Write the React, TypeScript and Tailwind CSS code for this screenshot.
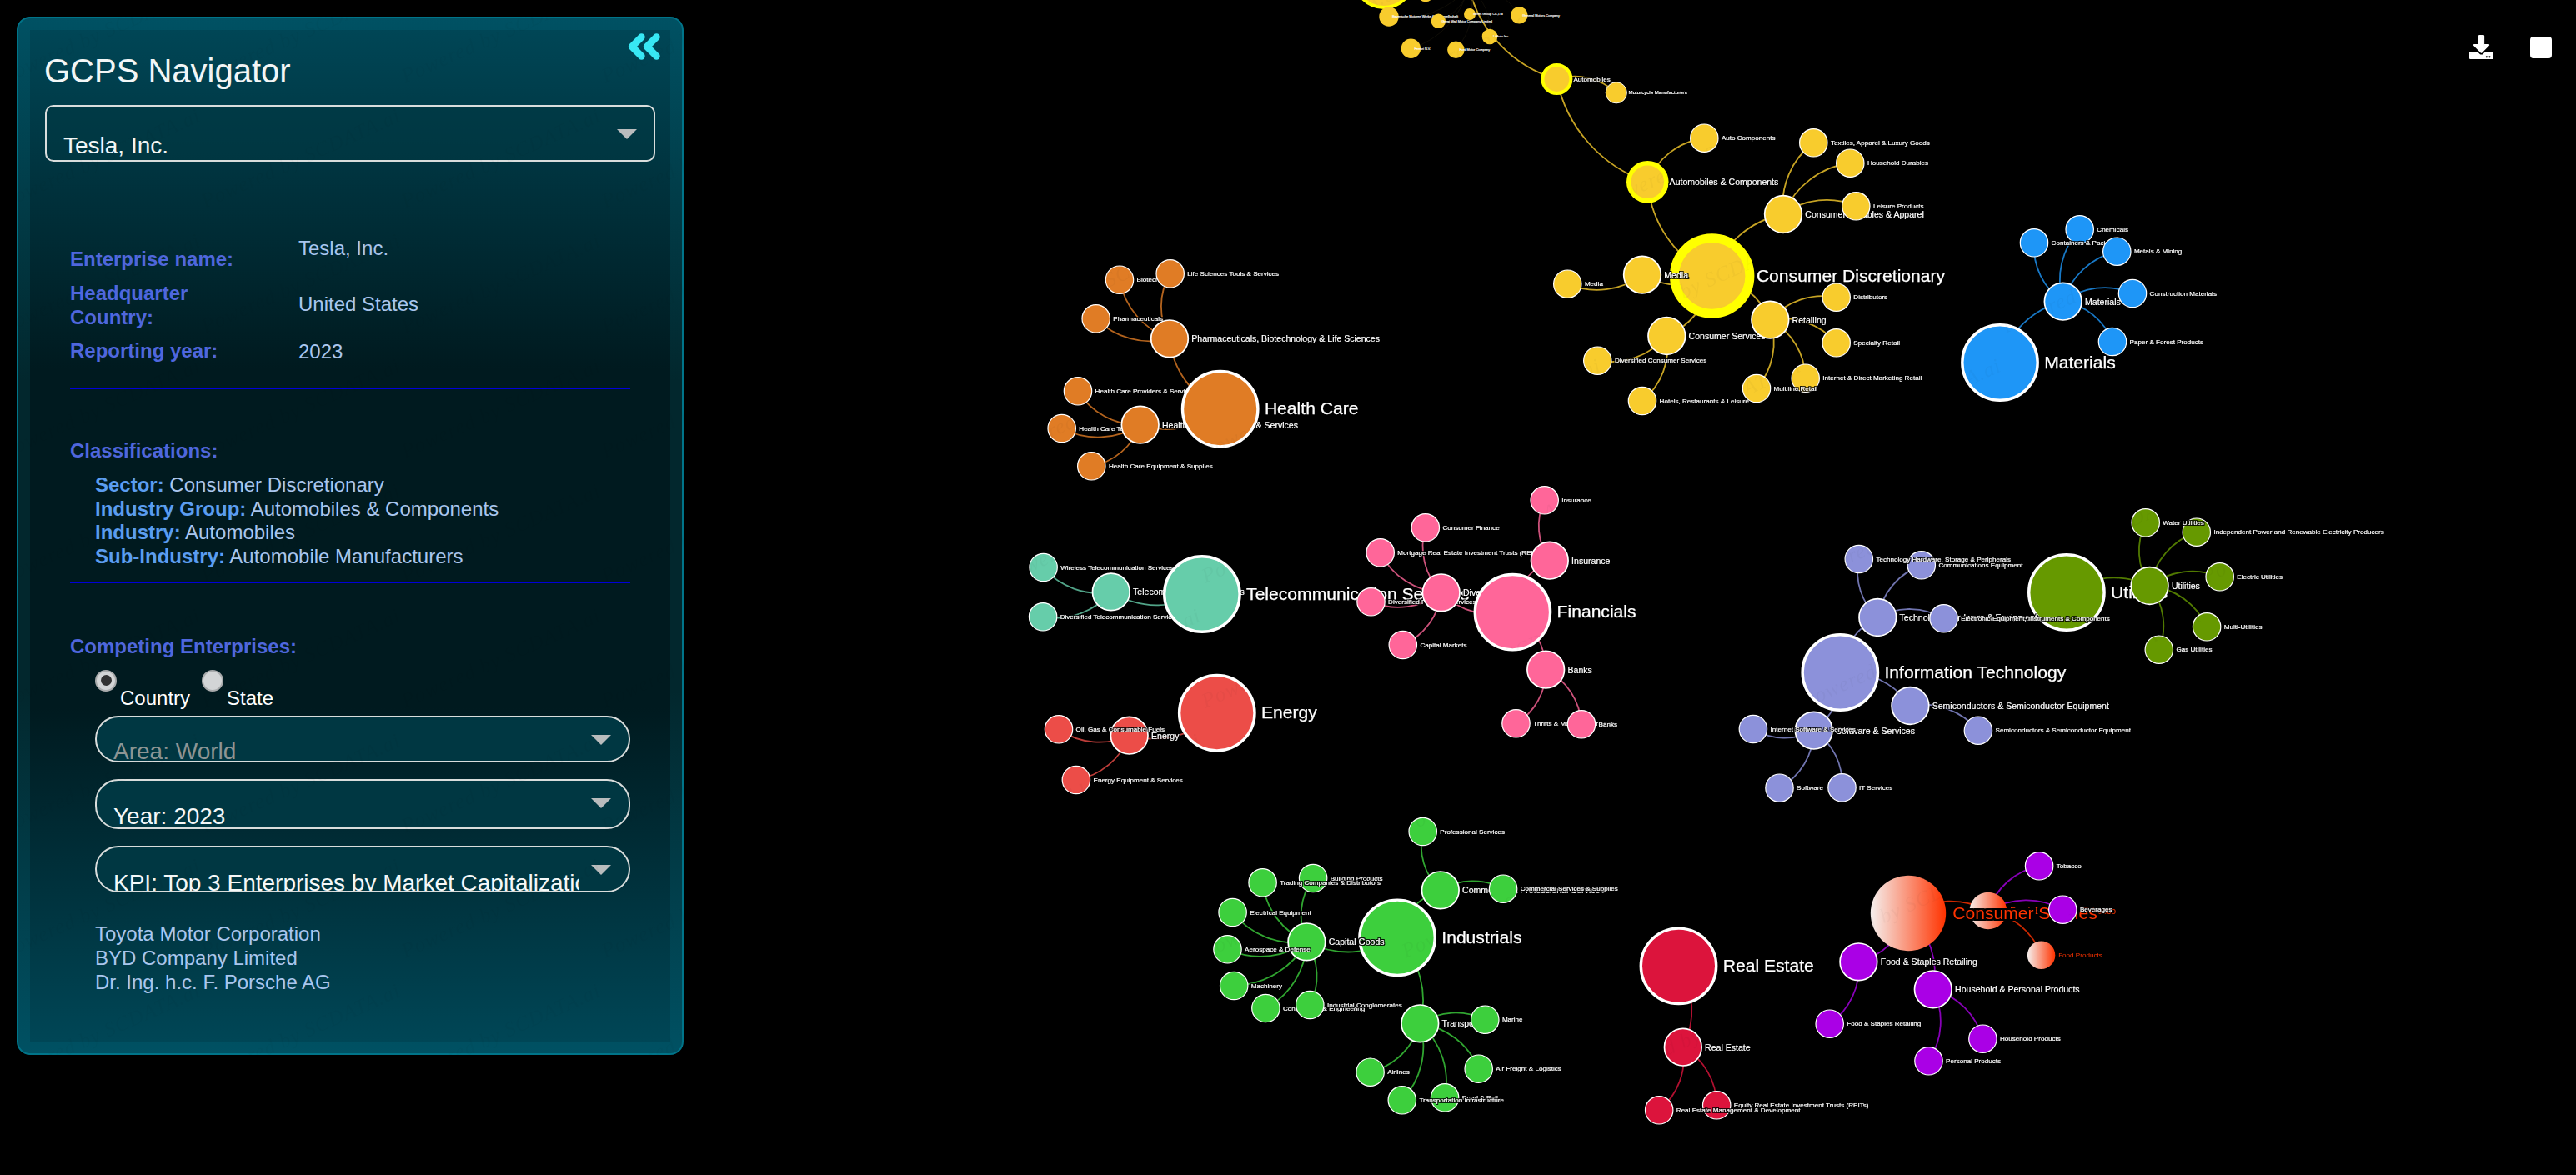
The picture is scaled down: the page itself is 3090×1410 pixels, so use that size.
import React from "react";
import { FaDownload } from "react-icons/fa";

type GraphNode = {
  x: number;
  y: number;
  level: 1 | 2 | 3;
  name: string;
  parent?: [number, number];
  gradient?: boolean;
  selected?: boolean;
};

type Sector = { color: string; nodes: GraphNode[] };

const n = (
  level: 1 | 2 | 3,
  x: number,
  y: number,
  name: string,
  parent?: [number, number],
  extra: Partial<GraphNode> = {},
): GraphNode => ({ level, x, y, name, parent, ...extra });

const DISC: [number, number] = [2053.7, 331];
const AUTO: [number, number] = [1976.3, 218.3];
const DURABLES: [number, number] = [2139, 257];
const MEDIA: [number, number] = [1970, 329.7];
const SERVICES: [number, number] = [1999.3, 403];
const RETAIL: [number, number] = [2123.3, 383.7];
const HEALTH: [number, number] = [1463.7, 490.7];
const PHARMA: [number, number] = [1403, 406.3];
const HEALTH_EQ: [number, number] = [1367.7, 509.7];
const MATERIALS: [number, number] = [2399, 435];
const MATERIALS2: [number, number] = [2474.7, 361.7];
const TELECOM: [number, number] = [1441.9, 713];
const TELECOM2: [number, number] = [1332.8, 710.4];
const FIN: [number, number] = [1814.4, 734.7];
const INSURANCE: [number, number] = [1858.8, 672.7];
const DIVFIN: [number, number] = [1728.7, 711.3];
const BANKS: [number, number] = [1854.2, 803.7];
const ENERGY: [number, number] = [1459.8, 855.7];
const ENERGY2: [number, number] = [1354.7, 882.7];
const INDUSTRIALS: [number, number] = [1676.1, 1125.3];
const COMMERCIAL: [number, number] = [1727.8, 1068.3];
const CAPITAL: [number, number] = [1567.4, 1130.3];
const TRANSPORT: [number, number] = [1703.3, 1228.3];
const ESTATE: [number, number] = [2013.5, 1159.3];
const ESTATE2: [number, number] = [2018.8, 1256.7];
const STAPLES: [number, number] = [2289, 1096];
const FOOD: [number, number] = [2384.9, 1093];
const FOOD_RETAIL: [number, number] = [2229.4, 1154.3];
const HOUSEHOLD: [number, number] = [2318.8, 1187.3];
const UTIL: [number, number] = [2478.9, 711];
const UTIL2: [number, number] = [2578.6, 703];
const IT: [number, number] = [2207.3, 807];
const HARDWARE: [number, number] = [2252.3, 741];
const SEMI: [number, number] = [2291.4, 847];
const SOFTWARE: [number, number] = [2175.7, 876.7];

const sectors: Sector[] = [
  {
    color: "#f8cc2d",
    nodes: [
      n(1, ...DISC, "Consumer Discretionary", undefined, { selected: true }),
      n(2, ...MEDIA, "Media", DISC),
      n(3, 1880.3, 340.7, "Media", MEDIA),
      n(2, ...AUTO, "Automobiles & Components", DISC, { selected: true }),
      n(3, 2044.3, 165.7, "Auto Components", AUTO),
      n(2, ...DURABLES, "Consumer Durables & Apparel", DISC),
      n(3, 2175.3, 171.3, "Textiles, Apparel & Luxury Goods", DURABLES),
      n(3, 2219.3, 195.7, "Household Durables", DURABLES),
      n(3, 2226.3, 247.3, "Leisure Products", DURABLES),
      n(2, ...SERVICES, "Consumer Services", DISC),
      n(3, 1916.3, 432.7, "Diversified Consumer Services", SERVICES),
      n(3, 1970, 481, "Hotels, Restaurants & Leisure", SERVICES),
      n(2, ...RETAIL, "Retailing", DISC),
      n(3, 2202.7, 356.7, "Distributors", RETAIL),
      n(3, 2202.7, 411.3, "Specialty Retail", RETAIL),
      n(3, 2165.7, 453.7, "Internet & Direct Marketing Retail", RETAIL),
      n(3, 2107, 466, "Multiline Retail", RETAIL),
    ],
  },
  {
    color: "#e07c25",
    nodes: [
      n(3, 1343, 335.7, "Biotechnology", PHARMA),
      n(3, 1403.7, 328.3, "Life Sciences Tools & Services", PHARMA),
      n(3, 1314.7, 382.3, "Pharmaceuticals", PHARMA),
      n(2, ...PHARMA, "Pharmaceuticals, Biotechnology & Life Sciences", HEALTH),
      n(3, 1293, 469.3, "Health Care Providers & Services", HEALTH_EQ),
      n(3, 1273.7, 514, "Health Care Technology", HEALTH_EQ),
      n(3, 1309.3, 559.3, "Health Care Equipment & Supplies", HEALTH_EQ),
      n(2, ...HEALTH_EQ, "Health Care Equipment & Services", HEALTH),
      n(1, ...HEALTH, "Health Care"),
    ],
  },
  {
    color: "#1e96f7",
    nodes: [
      n(1, ...MATERIALS, "Materials"),
      n(2, ...MATERIALS2, "Materials", MATERIALS),
      n(3, 2494.7, 275.3, "Chemicals", MATERIALS2),
      n(3, 2440, 291.3, "Containers & Packaging", MATERIALS2),
      n(3, 2539.3, 301.7, "Metals & Mining", MATERIALS2),
      n(3, 2558, 352, "Construction Materials", MATERIALS2),
      n(3, 2534, 410, "Paper & Forest Products", MATERIALS2),
    ],
  },
  {
    color: "#66cdaa",
    nodes: [
      n(3, 1251.6, 681, "Wireless Telecommunication Services", TELECOM2),
      n(3, 1251.1, 740.3, "Diversified Telecommunication Services", TELECOM2),
      n(2, ...TELECOM2, "Telecommunication Services", TELECOM),
      n(1, ...TELECOM, "Telecommunication Services"),
    ],
  },
  {
    color: "#ff6699",
    nodes: [
      n(3, 1852.7, 600.3, "Insurance", INSURANCE),
      n(3, 1709.8, 633.3, "Consumer Finance", DIVFIN),
      n(3, 1655.7, 663.3, "Mortgage Real Estate Investment Trusts (REITs)", DIVFIN),
      n(3, 1644.5, 722.3, "Diversified Financial Services", DIVFIN),
      n(2, ...DIVFIN, "Diversified Financials", FIN),
      n(3, 1682.8, 774, "Capital Markets", DIVFIN),
      n(1, ...FIN, "Financials"),
      n(2, ...INSURANCE, "Insurance", FIN),
      n(2, ...BANKS, "Banks", FIN),
      n(3, 1818.5, 868.3, "Thrifts & Mortgage Finance", BANKS),
      n(3, 1897, 869.3, "Banks", BANKS),
    ],
  },
  {
    color: "#ec4d48",
    nodes: [
      n(1, ...ENERGY, "Energy"),
      n(2, ...ENERGY2, "Energy", ENERGY),
      n(3, 1270, 875.3, "Oil, Gas & Consumable Fuels", ENERGY2),
      n(3, 1290.9, 936, "Energy Equipment & Services", ENERGY2),
    ],
  },
  {
    color: "#3dcf3d",
    nodes: [
      n(1, ...INDUSTRIALS, "Industrials"),
      n(3, 1706.7, 998, "Professional Services", COMMERCIAL),
      n(2, ...COMMERCIAL, "Commercial & Professional Services", INDUSTRIALS),
      n(3, 1803.1, 1066.7, "Commercial Services & Supplies", COMMERCIAL),
      n(2, ...CAPITAL, "Capital Goods", INDUSTRIALS),
      n(3, 1575.1, 1054, "Building Products", CAPITAL),
      n(3, 1514.6, 1059.3, "Trading Companies & Distributors", CAPITAL),
      n(3, 1478.6, 1095, "Electrical Equipment", CAPITAL),
      n(3, 1472.5, 1139.3, "Aerospace & Defense", CAPITAL),
      n(3, 1480.2, 1183, "Machinery", CAPITAL),
      n(3, 1518.4, 1210, "Construction & Engineering", CAPITAL),
      n(3, 1571.3, 1206, "Industrial Conglomerates", CAPITAL),
      n(2, ...TRANSPORT, "Transportation", INDUSTRIALS),
      n(3, 1781.3, 1223.7, "Marine", TRANSPORT),
      n(3, 1773.7, 1282.7, "Air Freight & Logistics", TRANSPORT),
      n(3, 1643.6, 1286.7, "Airlines", TRANSPORT),
      n(3, 1733.1, 1317.3, "Road & Rail", TRANSPORT),
      n(3, 1681.8, 1320.3, "Transportation Infrastructure", TRANSPORT),
    ],
  },
  {
    color: "#dc143c",
    nodes: [
      n(1, ...ESTATE, "Real Estate"),
      n(2, ...ESTATE2, "Real Estate", ESTATE),
      n(3, 2059.2, 1326.3, "Equity Real Estate Investment Trusts (REITs)", ESTATE2),
      n(3, 1990.2, 1332.3, "Real Estate Management & Development", ESTATE2),
    ],
  },
  {
    color: "#aa00e6",
    nodes: [
      n(2, ...FOOD, "Food, Beverage & Tobacco", STAPLES, { gradient: true }),
      n(1, ...STAPLES, "Consumer Staples", undefined, { gradient: true }),
      n(3, 2446.1, 1039.3, "Tobacco", FOOD),
      n(3, 2474.3, 1091.7, "Beverages", FOOD),
      n(3, 2448.6, 1146.3, "Food Products", FOOD, { gradient: true }),
      n(2, ...FOOD_RETAIL, "Food & Staples Retailing", STAPLES),
      n(3, 2194.7, 1228.7, "Food & Staples Retailing", FOOD_RETAIL),
      n(2, ...HOUSEHOLD, "Household & Personal Products", STAPLES),
      n(3, 2378.4, 1246.7, "Household Products", HOUSEHOLD),
      n(3, 2313.5, 1273.3, "Personal Products", HOUSEHOLD),
    ],
  },
  {
    color: "#669900",
    nodes: [
      n(1, ...UTIL, "Utilities"),
      n(2, ...UTIL2, "Utilities", UTIL),
      n(3, 2634.8, 638.7, "Independent Power and Renewable Electricity Producers", UTIL2),
      n(3, 2573.7, 627.3, "Water Utilities", UTIL2),
      n(3, 2662.7, 692.3, "Electric Utilities", UTIL2),
      n(3, 2647.1, 752.3, "Multi-Utilities", UTIL2),
      n(3, 2589.8, 779.7, "Gas Utilities", UTIL2),
    ],
  },
  {
    color: "#8c91da",
    nodes: [
      n(2, ...HARDWARE, "Technology Hardware & Equipment", IT),
      n(3, 2304.8, 678.3, "Communications Equipment", HARDWARE),
      n(3, 2229.8, 671, "Technology Hardware, Storage & Peripherals", HARDWARE),
      n(3, 2331.6, 742.3, "Electronic Equipment, Instruments & Components", HARDWARE),
      n(1, ...IT, "Information Technology"),
      n(2, ...SEMI, "Semiconductors & Semiconductor Equipment", IT),
      n(3, 2372.9, 876.7, "Semiconductors & Semiconductor Equipment", SEMI),
      n(2, ...SOFTWARE, "Software & Services", IT),
      n(3, 2102.9, 875, "Internet Software & Services", SOFTWARE),
      n(3, 2134.5, 945.7, "Software", SOFTWARE),
      n(3, 2209.5, 945.3, "IT Services", SOFTWARE),
    ],
  },
];

const LEVELS = {
  1: { r: 45.2, stroke: 3.4, font: 21.1, dx: 53.2, dy: 6.6, weight: 0.25 },
  2: { r: 22.3, stroke: 1.7, font: 10.55, dx: 26.3, dy: 3.8, weight: 0.2 },
  3: { r: 16.7, stroke: 1.2, font: 8.08, dx: 20.6, dy: 2.7, weight: 0.2 },
};

const SELECTED = {
  1: { r: 45.2, stroke: 11 },
  2: { r: 22.5, stroke: 5.6 },
  3: { r: 16.7, stroke: 4 },
};

function arc(from: [number, number], to: [number, number]) {
  const d = Math.hypot(to[0] - from[0], to[1] - from[1]);
  return `M${from[0]},${from[1]}A${d},${d} 0 0 1 ${to[0]},${to[1]}`;
}

function NodeMark({ node, color }: { node: GraphNode; color: string }) {
  const s = LEVELS[node.level];
  const sel = SELECTED[node.level];
  const stroke = node.selected ? "#ffff00" : node.gradient ? "none" : "#ffffff";
  const ink = node.gradient ? "#ff3300" : "#ffffff";
  return (
    <g>
      <circle
        cx={node.x}
        cy={node.y}
        r={node.selected ? sel.r : s.r}
        fill={node.gradient ? "url(#hot)" : color}
        stroke={stroke}
        strokeWidth={node.selected ? sel.stroke : s.stroke}
      />
      <text
        x={node.x + s.dx}
        y={node.y + s.dy}
        fontSize={s.font}
        fill={ink}
        stroke={ink}
        strokeWidth={node.gradient ? 0 : s.weight}
        filter={node.gradient ? "url(#halo-wide)" : "url(#halo)"}
      >
        {node.name}
      </text>
    </g>
  );
}

const companies = [
  { x: 1666, y: 20, r: 11.7, name: "Bayerische Motoren Werke Aktiengesellschaft" },
  { x: 1725.4, y: 25.3, r: 8.7, name: "Great Wall Motor Company Limited" },
  { x: 1763, y: 17, r: 7, name: "Seres Group Co.,Ltd" },
  { x: 1787, y: 44, r: 9.3, name: "Li Auto Inc." },
  { x: 1822.3, y: 18.3, r: 10.3, name: "General Motors Company" },
  { x: 1692.4, y: 58.3, r: 11.7, name: "Ferrari N.V." },
  { x: 1746.4, y: 59.7, r: 10.3, name: "Ford Motor Company" },
];

function Graph() {
  return (
    <svg
      className="absolute inset-0 h-[1410px] w-[3090px]"
      viewBox="0 0 3090 1410"
      fontFamily="'Liberation Sans', Arial, sans-serif"
    >
      <defs>
        <linearGradient id="hot" x1="0" x2="1" y1="0" y2="0">
          <stop offset="0" stopColor="#f5f0ee" />
          <stop offset="1" stopColor="#ff3300" />
        </linearGradient>
        <filter id="halo" x="-10%" y="-40%" width="120%" height="180%" colorInterpolationFilters="sRGB">
          <feMorphology in="SourceAlpha" operator="dilate" radius="1" result="edge" />
          <feMerge>
            <feMergeNode in="edge" />
            <feMergeNode in="SourceGraphic" />
          </feMerge>
        </filter>
        <filter id="halo-wide" x="-10%" y="-40%" width="120%" height="180%" colorInterpolationFilters="sRGB">
          <feMorphology in="SourceAlpha" operator="dilate" radius="3 2" result="edge" />
          <feMerge>
            <feMergeNode in="edge" />
            <feMergeNode in="SourceGraphic" />
          </feMerge>
        </filter>
      </defs>
      <g fill="none" strokeWidth="1.8" opacity="0.8">
        {sectors.map((s) =>
          s.nodes
            .filter((d) => d.parent)
            .map((d) => (
              <path
                key={`${d.x}-${d.y}`}
                d={arc(d.parent!, [d.x, d.y])}
                stroke={d.gradient ? "#ff3300" : s.color}
              />
            )),
        )}
        <path d={arc(AUTO, [1867.4, 95])} stroke="#f8cc2d" />
        <path d={arc([1867.4, 95], [1761.5, -15.7])} stroke="#f8cc2d" />
        <path d={arc([1867.4, 95], [1938.8, 111.3])} stroke="#f8cc2d" />
      </g>
      <g fill="none" stroke="#15130a" strokeWidth="0.7">
        {companies.map((c) => (
          <path key={c.name} d={arc([1761.5, -15.7], [c.x, c.y])} />
        ))}
      </g>
      <circle cx="1660" cy="-26.7" r="35.7" fill="#f8cc2d" stroke="#ffff00" strokeWidth="4" />
      <circle cx="1710" cy="-7.7" r="10" fill="#f8cc2d" />
      {companies.map((c) => (
        <g key={c.name}>
          <circle cx={c.x} cy={c.y} r={c.r} fill="#f8cc2d" />
          <text x={c.x + 4} y={c.y + 1.3} fontSize="3.9" fill="#ffffff" stroke="#ffffff" strokeWidth="0.15">
            {c.name}
          </text>
        </g>
      ))}
      <circle cx="1867.4" cy="95" r="17" fill="#f8cc2d" stroke="#ffff00" strokeWidth="4" />
      <circle cx="1938.8" cy="111.3" r="12.6" fill="#f8cc2d" stroke="#ffffff" strokeWidth="0.9" />
      <g fill="#ffffff" stroke="#ffffff" strokeWidth="0.2">
        <text x="1887.4" y="98" fontSize="8.08" filter="url(#halo)">
          Automobiles
        </text>
        <text x="1953.6" y="113.2" fontSize="6.1" filter="url(#halo)">
          Motorcycle Manufacturers
        </text>
      </g>
      {sectors.map((s) => (
        <g key={s.color}>
          {s.nodes.map((d) => (
            <NodeMark key={`${d.x}-${d.y}`} node={d} color={s.color} />
          ))}
        </g>
      ))}
    </svg>
  );
}

function Watermark() {
  return (
    <svg className="pointer-events-none absolute inset-0 h-[1410px] w-[3090px]">
      <defs>
        <pattern id="wm" width="240" height="150" patternUnits="userSpaceOnUse">
          {[-240, 0, 240].map((dx) =>
            [-50, 100, 250].map((dy) => (
              <text
                key={`${dx}${dy}`}
                transform={`translate(${dx + 6} ${dy}) rotate(-24)`}
                fontFamily="'Liberation Serif', serif"
                fontStyle="italic"
                fontSize="25"
                letterSpacing="1"
                fill="#000000"
              >
                Powered by SCDATA.ai
              </text>
            )),
          )}
        </pattern>
      </defs>
      <rect width="3090" height="1410" fill="url(#wm)" opacity="0.03" />
    </svg>
  );
}

function Caret({ className }: { className: string }) {
  return (
    <svg viewBox="0 0 24 12" className={className}>
      <path d="M0 0H24L12 12Z" fill="#b9bcbd" />
    </svg>
  );
}

function Pill({ label, className, muted = false }: { label: string; className: string; muted?: boolean }) {
  return (
    <div
      className={`flex w-[642px] justify-between overflow-hidden rounded-[28px] border-2 border-[#d9dddc] bg-[#003742] pl-[20px] pr-[21px] ${className}`}
    >
      <div
        className={`w-[558px] overflow-hidden whitespace-nowrap text-[28px] leading-8 ${
          muted ? "pt-[25px] text-[#8d9594]" : "pt-[27px] text-[#f5f8f8]"
        }`}
      >
        {label}
      </div>
      <Caret className="mt-[21px] h-3 w-6" />
    </div>
  );
}

function Radio({ label, checked = false }: { label: string; checked?: boolean }) {
  return (
    <div className="flex">
      <div className="flex size-[26px] items-center justify-center rounded-full border-2 border-[#a9abac] bg-[#d3d5d6]">
        {checked && <div className="size-[13px] rounded-full bg-[#333333]" />}
      </div>
      <div className="ml-1 mt-5 text-2xl leading-7 text-white">{label}</div>
    </div>
  );
}

const classifications = [
  ["Sector:", "Consumer Discretionary"],
  ["Industry Group:", "Automobiles & Components"],
  ["Industry:", "Automobiles"],
  ["Sub-Industry:", "Automobile Manufacturers"],
];

function Navigator() {
  return (
    <aside className="relative ml-5 mt-5 h-[1246px] w-[800px] overflow-hidden rounded-2xl border-2 border-[#007489] bg-[linear-gradient(180deg,#005163_0%,#02272d_35%,#02272d_65%,#005163_100%)] p-[14px]">
      <div className="relative h-[1214px] w-[768px] bg-[linear-gradient(180deg,#004656_0%,#001a1f_33.5%,#001a1f_67%,#004656_100%)]">
        <svg
          viewBox="0 0 40 33"
          className="absolute right-[11px] top-[3px] h-[33px] w-10"
          fill="none"
          stroke="#38e8f4"
          strokeWidth="8.4"
          strokeLinecap="round"
          strokeLinejoin="round"
        >
          <path d="M16.5 5.5 5 17 16.5 28.5M34.5 5.5 23 17 34.5 28.5" />
        </svg>
        <div className="px-[18px] pt-[27px]">
          <h1 className="-ml-px h-11 text-[40px] leading-[44px] text-[#f2f6f6]">GCPS Navigator</h1>
          <div className="mt-[19px] flex h-[68px] w-[732px] justify-between overflow-hidden rounded-[10px] border-2 border-[#d9dddc] bg-[#003742]/50 pl-5 pr-[20px]">
            <div className="pt-[31px] text-[28px] leading-8 text-[#f2f6f6]">Tesla, Inc.</div>
            <Caret className="mt-[27px] h-3 w-6" />
          </div>
        </div>
        <div className="ml-[48px] w-[672px] text-2xl">
          <div className="flex h-[273px] border-b-2 border-[#0000d8] leading-[28.8px]">
            <div className="w-[274px] pt-[103px] font-bold text-[#4f67dd]">
              <div>Enterprise name:</div>
              <div className="mt-[12.7px]">
                Headquarter
                <br />
                Country:
              </div>
              <div className="mt-[11px]">Reporting year:</div>
            </div>
            <div className="pt-[90px] text-[#a9c6ee]">
              <div>Tesla, Inc.</div>
              <div className="mt-[38.5px]">United States</div>
              <div className="mt-[27.5px]">2023</div>
            </div>
          </div>
          <div className="flex h-[233px] flex-col border-b-2 border-[#0000d8] pt-[59.5px] leading-[28.8px]">
            <div className="font-bold text-[#4f67dd]">Classifications:</div>
            <div className="ml-[30px] mt-[12.5px] text-[#a9c6ee]">
              {classifications.map(([k, v]) => (
                <div key={k}>
                  <span className="font-bold text-[#5b9df0]">{k}</span> {v}
                </div>
              ))}
            </div>
          </div>
          <div className="pt-[61.5px] font-bold leading-[28.8px] text-[#4f67dd]">Competing Enterprises:</div>
          <div className="ml-[30px]">
            <div className="mt-[13.7px] flex h-[55px] gap-[14px]">
              <Radio label="Country" checked />
              <Radio label="State" />
            </div>
            <Pill label="Area: World" className="h-[56px]" muted />
            <Pill label="Year: 2023" className="mt-5 h-[60px]" />
            <Pill label="KPI: Top 3 Enterprises by Market Capitalization" className="mt-5 h-[56px]" />
            <div className="mt-[36px] leading-[28.8px] text-[#a9c6ee]">
              <div>Toyota Motor Corporation</div>
              <div>BYD Company Limited</div>
              <div>Dr. Ing. h.c. F. Porsche AG</div>
            </div>
          </div>
        </div>
      </div>
    </aside>
  );
}

export default function App() {
  return (
    <main className="relative flex h-[1410px] w-[3090px] items-start justify-between overflow-hidden bg-black font-['Liberation_Sans',Arial,sans-serif]">
      <Graph />
      <Navigator />
      <div className="relative mr-[29px] mt-[42px] flex items-center gap-[44px] text-white">
        <FaDownload className="size-[29px]" />
        <div className="size-[26px] rounded-[4px] bg-white" />
      </div>
      <Watermark />
    </main>
  );
}
